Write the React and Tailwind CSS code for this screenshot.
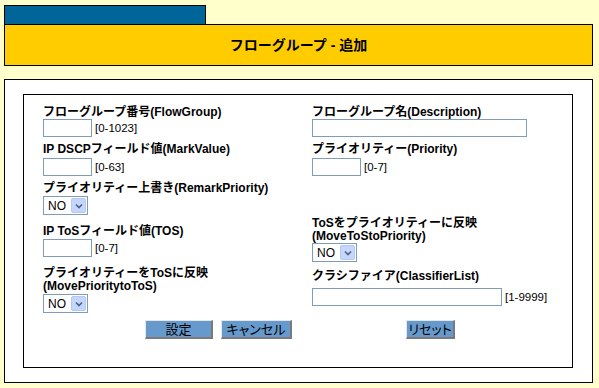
import React from "react";

function TextInput({ w }) {
  return <div className={`${w} h-[18px] border border-[#7f9db9] bg-white`} />;
}

function Hint({ children }) {
  return <span className="ml-[3px] text-[11.5px] leading-[18px] font-normal text-black">{children}</span>;
}

function Select() {
  return (
    <div className="w-[45px] h-[19px] border border-[#7f9db9] bg-white flex items-center justify-between pl-[4px] pr-[1px]">
      <span className="text-[12px] font-normal leading-none text-black">NO</span>
      <div className="w-[15px] h-[15px] rounded-[2px] bg-[#c4d6fb] border border-[#b4c8f4] flex items-center justify-center">
        <svg width="8" height="6" viewBox="0 0 8 6">
          <path d="M1 1.5 L4 4.5 L7 1.5" fill="none" stroke="#4d6185" strokeWidth="1.6" />
        </svg>
      </div>
    </div>
  );
}

function Button({ w, children }) {
  return (
    <div
      className={`${w} h-[19px] bg-[#6699cc] border-t border-l border-t-[#e6e6e6] border-l-[#e6e6e6] border-r-2 border-b-2 border-r-[#7a7a7a] border-b-[#7a7a7a] flex items-center justify-center text-[13px] font-normal text-black leading-none [font-feature-settings:'palt']`}
    >
      {children}
    </div>
  );
}

function Label({ children, lh = "leading-[14px]", className = "" }) {
  return <div className={`text-[12px] font-bold ${lh} text-black whitespace-nowrap ${className}`}>{children}</div>;
}

export default function App() {
  return (
    <div className="min-h-[388px] w-full bg-[#ffffcc] pt-[5px] pl-[4px] font-['Liberation_Sans','Noto_Sans_CJK_JP',sans-serif]">
      <div className="w-[202px] h-[19px] bg-[#006699] border-t border-l border-r border-black" />
      <div className="w-[589px] h-[42px] bg-[#ffcc00] border border-black flex items-center justify-center">
        <span className="text-[14px] font-bold text-black">フローグループ - 追加</span>
      </div>
      <div className="mt-[13px] w-[589px] h-[304px] bg-white border border-black pt-[14px] pl-[18px]">
        <div className="w-[550px] h-[274px] border border-black pt-[10px]">
          <div className="flex">
            {/* left column */}
            <div className="w-[288px] pl-[19px] flex flex-col">
              <Label>フローグループ番号(FlowGroup)</Label>
              <div className="flex items-center">
                <TextInput w="w-[49px]" />
                <Hint>[0-1023]</Hint>
              </div>
              <Label className="mt-[5px]">IP DSCPフィールド値(MarkValue)</Label>
              <div className="mt-[2px] flex items-center">
                <TextInput w="w-[49px]" />
                <Hint>[0-63]</Hint>
              </div>
              <Label className="mt-[5px]">プライオリティー上書き(RemarkPriority)</Label>
              <div className="mt-[1px]">
                <Select />
              </div>
              <Label className="mt-[9px]">IP ToSフィールド値(TOS)</Label>
              <div className="mt-[1px] flex items-center">
                <TextInput w="w-[49px]" />
                <Hint>[0-7]</Hint>
              </div>
              <Label lh="leading-[13px]" className="mt-[10px]">
                プライオリティーをToSに反映
                <br />
                (MovePrioritytoToS)
              </Label>
              <div className="mt-[1px]">
                <Select />
              </div>
            </div>
            {/* right column */}
            <div className="flex flex-col">
              <Label>フローグループ名(Description)</Label>
              <TextInput w="w-[215px]" />
              <Label className="mt-[5px]">プライオリティー(Priority)</Label>
              <div className="mt-[2px] flex items-center">
                <TextInput w="w-[49px]" />
                <Hint>[0-7]</Hint>
              </div>
              <Label lh="leading-[13px]" className="mt-[41px]">
                ToSをプライオリティーに反映
                <br />
                (MoveToStoPriority)
              </Label>
              <div className="mt-[0px]">
                <Select />
              </div>
              <Label className="mt-[7px]">クラシファイア(ClassifierList)</Label>
              <div className="mt-[5px] flex items-center">
                <TextInput w="w-[190px]" />
                <Hint>[1-9999]</Hint>
              </div>
            </div>
          </div>
          <div className="mt-[7px] flex">
            <div className="ml-[121px] flex gap-[8px]">
              <Button w="w-[68px]">設定</Button>
              <Button w="w-[71px]">キャンセル</Button>
            </div>
            <div className="ml-[114px]">
              <Button w="w-[49px]">リセット</Button>
            </div>
          </div>
        </div>
      </div>
    </div>
  );
}
